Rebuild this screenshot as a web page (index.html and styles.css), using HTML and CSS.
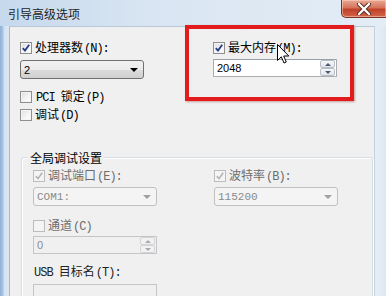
FILE: index.html
```html
<!DOCTYPE html>
<html>
<head>
<meta charset="utf-8">
<link rel="stylesheet" href="styles.css">
</head>
<body>
<div class="window">
  <div class="titlebar">
    <span class="title">引导高级选项</span>
    <div class="close">
      <svg width="16" height="12" viewBox="0 0 16 12"><path d="M3 1 L13 11 M13 1 L3 11" stroke="#5a2a20" stroke-width="4.2" stroke-linecap="round"/><path d="M3 1 L13 11 M13 1 L3 11" stroke="#fff" stroke-width="2.4" stroke-linecap="round"/></svg>
    </div>
  </div>
  <div class="frame">
    <div class="edge-left"></div>
    <div class="panel">
      <div class="top">
        <div class="col">
          <div class="chk"><span class="box on"></span><span class="lbl">处理器数<span class="en">(N):</span></span></div>
          <div class="combo"><span class="val">2</span><span class="arrow"></span></div>
          <div class="chk mt-pci"><span class="box"></span><span class="lbl"><span class="en">PCI </span>锁定<span class="en">(P)</span></span></div>
          <div class="chk mt-dbg"><span class="box"></span><span class="lbl">调试<span class="en">(D)</span></span></div>
        </div>
        <div class="col col-right">
          <div class="chk"><span class="box on"></span><span class="lbl">最大内存<span class="en">(M):</span></span></div>
          <div class="spin mt-spin"><span class="val">2048</span><span class="spinbtns"><span class="sb up"></span><span class="sb down"></span></span></div>
        </div>
      </div>
      <div class="group">
        <div class="group-title">全局调试设置</div>
        <div class="gcols">
          <div class="col">
            <div class="chk dis"><span class="box on"></span><span class="lbl">调试端口<span class="en">(E):</span></span></div>
            <div class="combo dis mt-combo"><span class="val">COM1:</span><span class="arrow"></span></div>
            <div class="chk dis mt-ch"><span class="box"></span><span class="lbl">通道<span class="en">(C)</span></span></div>
            <div class="spin dis mt-chspin"><span class="val">0</span><span class="spinbtns"><span class="sb up"></span><span class="sb down"></span></span></div>
            <div class="plain mt-usb"><span class="en">USB </span>目标名<span class="en">(T):</span></div>
            <div class="spin dis mt-usbin"></div>
          </div>
          <div class="col">
            <div class="chk dis"><span class="box on"></span><span class="lbl">波特率<span class="en">(B):</span></span></div>
            <div class="combo dis mt-combo"><span class="val">115200</span><span class="arrow"></span></div>
          </div>
        </div>
      </div>
    </div>
    <div class="edge-right"></div>
  </div>
  <div class="annot"></div>
  <svg class="cursor" width="13" height="20" viewBox="0 0 13 20"><path d="M0.5 0.5 L0.5 16.5 L4.3 12.8 L7 19 L9.3 18 L6.7 12 L11.8 12 Z" fill="#fff" stroke="#000" stroke-width="1" stroke-linejoin="miter"/></svg>
</div>
</body>
</html>
```
FILE: styles.css
```css
* { box-sizing: border-box; }
html, body { margin: 0; padding: 0; }
body {
  width: 386px;
  height: 296px;
  overflow: hidden;
  font-family: "Noto Sans CJK SC", sans-serif;
  font-size: 12px;
  color: #000;
}
.en {
  font-family: "Liberation Mono", monospace;
  font-size: 12px;
  letter-spacing: -1px;
  margin-left: 1px;
}
.window {
  position: relative;
  width: 386px;
  height: 296px;
  overflow: hidden;
  display: flex;
  flex-direction: column;
  background: #dbe6f2;
}
.titlebar {
  height: 26px;
  flex: none;
  display: flex;
  justify-content: space-between;
  align-items: flex-start;
  background: linear-gradient(to right, #c6d9ed 0%, #d9e5f2 40%, #e4edf6 100%);
}
.title {
  font-size: 12px;
  line-height: 14px;
  margin: 7px 0 0 8px;
  color: #1e1e1e;
}
.close {
  width: 46px;
  height: 18px;
  margin-right: -1px;
  border: 1px solid #7a3325;
  border-top: none;
  border-radius: 0 0 0 5px;
  background: linear-gradient(to bottom, #e8a996 0%, #d6745c 45%, #c0412a 55%, #d2654a 100%);
  display: flex;
  align-items: center;
  justify-content: center;
  box-shadow: inset 0 0 0 1px rgba(255,220,200,0.5);
}
.close svg { display: block; }
.frame {
  flex: 1;
  min-height: 0;
  display: flex;
}
.edge-left {
  width: 9px;
  flex: none;
  background: linear-gradient(to right, #8fb1d8 0px, #a9c4e2 3px, #d3e1f0 4px, #dbe6f2 8px);
}
.edge-right {
  width: 11px;
  flex: none;
  background: linear-gradient(to right, #e6edf5, #dfe8f2);
}
.panel {
  flex: 1;
  overflow: hidden;
  background: #f0f0f0;
  border-top: 1px solid #b8c8da;
  border-left: 1px solid #a8bad0;
  border-right: 1px solid #c3d1e0;
  padding: 14px 0 0 10px;
}
.top {
  display: flex;
  gap: 69px;
}
.col {
  width: 124px;
  display: flex;
  flex-direction: column;
}
.chk {
  display: flex;
  align-items: center;
  height: 13px;
  line-height: 13px;
}
.box {
  width: 12px;
  height: 12px;
  flex: none;
  margin-right: 3px;
  border: 1px solid #8f8f8f;
  background: linear-gradient(135deg, #dcdcdc 0%, #f6f6f6 60%, #ffffff 100%);
  box-shadow: inset 0 0 0 1px #f4f4f4;
  position: relative;
}
.box.on::after {
  content: "";
  position: absolute;
  left: 1px;
  top: 1px;
  width: 8px;
  height: 8px;
  background: no-repeat center/8px 8px url("data:image/svg+xml;utf8,<svg xmlns='http://www.w3.org/2000/svg' viewBox='0 0 8 8'><path d='M0.8 4.2 L3 6.6 L7.2 0.8' fill='none' stroke='%23203d8a' stroke-width='1.8'/></svg>");
}
.dis .box {
  border-color: #bcbcbc;
  background: #f4f4f4;
}
.dis .box.on::after {
  background: no-repeat center/8px 8px url("data:image/svg+xml;utf8,<svg xmlns='http://www.w3.org/2000/svg' viewBox='0 0 8 8'><path d='M0.8 4.2 L3 6.6 L7.2 0.8' fill='none' stroke='%23b2b2b2' stroke-width='1.6'/></svg>");
}
.lbl { white-space: nowrap; }
.dis .lbl { color: #6d6d6d; }
.plain { height: 14px; line-height: 14px; white-space: nowrap; }
.combo {
  height: 19px;
  border: 1px solid #707070;
  border-radius: 3px;
  background: linear-gradient(to bottom, #f2f2f2 0%, #ebebeb 50%, #dddddd 51%, #cfcfcf 100%);
  display: flex;
  align-items: center;
  justify-content: space-between;
  padding: 0 4px 0 3px;
}
.combo .val, .spin .val {
  font-family: "Liberation Sans", sans-serif;
  font-size: 11px;
}
.arrow {
  width: 0;
  height: 0;
  border-left: 4px solid transparent;
  border-right: 4px solid transparent;
  border-top: 4px solid #000;
  margin-right: 1px;
}
.combo.dis {
  border-color: #c0c0c0;
  background: #f4f4f4;
}
.combo.dis .val { color: #8a8a8a; font-family: "Liberation Mono", monospace; font-size: 11px; }
.combo.dis .arrow { border-top-color: #a0a0a0; }
.spin {
  height: 18px;
  border: 1px solid #abadb3;
  border-top-color: #9aa0a8;
  background: #fff;
  display: flex;
  align-items: center;
  justify-content: space-between;
  padding: 0 1px 0 3px;
}
.spinbtns {
  display: flex;
  flex-direction: column;
  width: 15px;
  height: 16px;
}
.sb {
  flex: 1;
  border: 1px solid #b9bec6;
  border-radius: 2px;
  background: linear-gradient(to bottom, #f6f7f9, #e2e5ea);
  display: flex;
  align-items: center;
  justify-content: center;
}
.sb::after {
  content: "";
  width: 0;
  height: 0;
  border-left: 3px solid transparent;
  border-right: 3px solid transparent;
}
.sb.up::after { border-bottom: 3px solid #4b5a6e; }
.sb.down::after { border-top: 3px solid #4b5a6e; }
.spin.dis {
  background: #f0f0f0;
  border-color: #c3c5c8;
}
.spin.dis .val { color: #8a8a8a; }
.spin.dis .sb { background: #f2f2f2; border-color: #d2d4d6; }
.spin.dis .sb.up::after { border-bottom-color: #aaa; }
.spin.dis .sb.down::after { border-top-color: #aaa; }
.mt-spin { margin-top: 5px; }
.mt-pci { margin-top: 11px; }
.mt-dbg { margin-top: 5px; }
.top .combo { margin-top: 6px; }
.group {
  margin: 36px 0 0 1px;
  width: 352px;
  height: 150px;
  border: 1px solid #d5dfe5;
  border-radius: 3px;
  box-shadow: inset 1px 1px 0 #fff, 1px 1px 0 #fff;
  padding: 0 0 0 11px;
}
.group-title {
  width: max-content;
  margin: -7px 0 0 -5px;
  padding: 0 2px;
  background: #f0f0f0;
  line-height: 13px;
  height: 13px;
}
.gcols {
  display: flex;
  gap: 57px;
  margin-top: 5px;
}
.mt-combo { margin-top: 5px; }
.mt-ch { margin-top: 13px; }
.mt-chspin { margin-top: 4px; }
.mt-usb { margin-top: 10px; color: #222; }
.mt-usbin { margin-top: 6px; height: 20px; }
.annot {
  position: absolute;
  left: 185px;
  top: 25px;
  width: 169px;
  height: 76px;
  border: 4px solid #e21c1c;
  box-shadow: 1px 1px 2px rgba(120,0,0,0.35);
}
.cursor {
  position: absolute;
  left: 277px;
  top: 44px;
}
```
